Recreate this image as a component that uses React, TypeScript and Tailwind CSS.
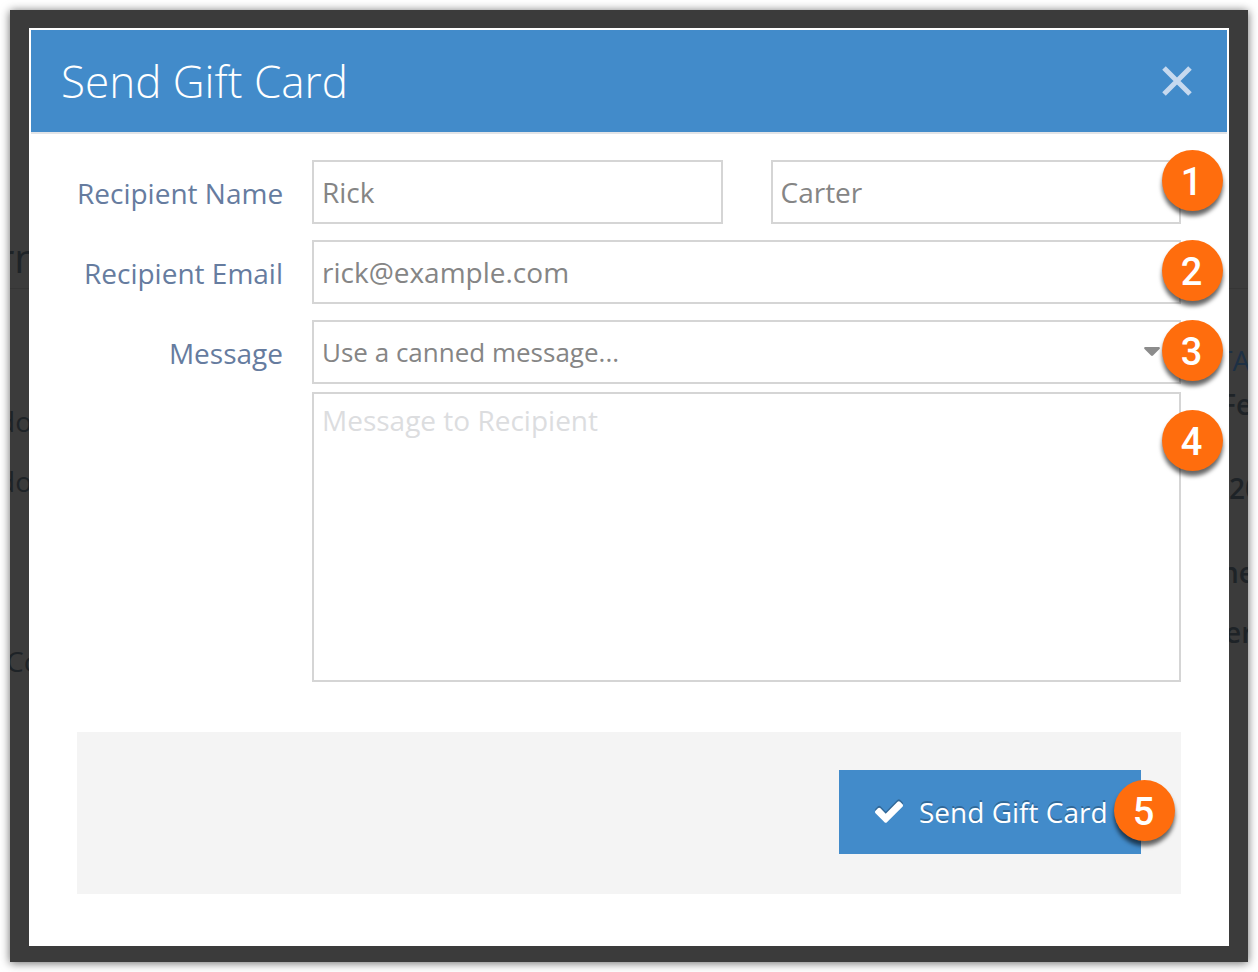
import type { ReactNode } from "react";

const fieldClass =
	"block w-full border-2 border-[#d5d5d5] bg-white px-2 text-[#858585] outline-none placeholder:text-[#dcdddf]";

const labelClass =
	"text-right text-[28px] leading-[66px] whitespace-nowrap text-[#667c9f]";

function Step({ n, className }: { n: number; className: string }) {
	return (
		<span
			className={`pointer-events-none absolute flex size-[61px] items-center justify-center rounded-full bg-[#ff6d0d] pr-0.5 pt-0.5 font-[Roboto,sans-serif] text-[38px] leading-none font-medium text-white shadow-[0_5px_4px_rgba(0,0,0,0.6)] ${className}`}
		>
			{n}
		</span>
	);
}

function Row({
	label,
	htmlFor,
	children,
}: {
	label: string;
	htmlFor: string;
	children: ReactNode;
}) {
	return (
		<div className="grid grid-cols-[206px_minmax(0,1fr)] gap-x-[29px]">
			<label htmlFor={htmlFor} className={labelClass}>
				{label}
			</label>
			{children}
		</div>
	);
}

/* Dimmed page showing on both sides of the dialog */
function PageLeft() {
	return (
		<div className="w-[19px] shrink-0 overflow-hidden pt-[218px] text-[28px] leading-10 whitespace-nowrap text-[#1e2327]">
			<p className="-ml-3 h-[61px] border-b border-[#353535] text-[40px] leading-[60px]">rn</p>
			<p className="-ml-3 pt-28">do</p>
			<p className="-ml-3 pt-5">do</p>
			<p className="-ml-1 pt-[140px]">Co</p>
		</div>
	);
}

function PageRight() {
	return (
		<div className="w-[19px] shrink-0 overflow-hidden whitespace-nowrap text-[28px] leading-10 font-semibold text-[#1e2327]">
			<div className="h-[279px] border-b border-[#353535]" />
			<p className="-ml-3 pt-[51px] font-normal text-[#1d3044]">TA</p>
			<p className="-ml-2 pt-1">Fe</p>
			<p className="pt-11">20</p>
			<p className="-ml-2 pt-11">ne</p>
			<p className="-ml-1 pt-5">er</p>
		</div>
	);
}

export default function App() {
	return (
		<div className="min-h-screen bg-white p-2.5 font-['Open_Sans',sans-serif]">
			<div className="flex bg-[#3b3b3b] shadow-[0_1px_9px_rgba(0,0,0,0.6)]">
				<PageLeft />

				<div
					role="dialog"
					aria-labelledby="dialog-title"
					className="mt-[18px] mb-4 min-w-0 flex-1 border-2 border-white bg-white"
				>
					<header className="flex h-[104px] items-center justify-between border-b-2 border-[#e2e4e7] bg-[#428bca] pr-[34px] pl-[30px]">
						<h1 id="dialog-title" className="text-[44px] leading-[60px] font-light text-white">
							Send Gift Card
						</h1>
						<button type="button" aria-label="Close" className="text-[#c6d9ef]">
							<svg width="32" height="32" viewBox="0 0 32 32" fill="none" stroke="currentColor" strokeWidth="5">
								<path d="M3 3 29 29M29 3 3 29" />
							</svg>
						</button>
					</header>

					<form className="px-[46px] pt-[26px] pb-[50px]" onSubmit={(e) => e.preventDefault()}>
						<div className="flex flex-col gap-3.5">
							<Row label="Recipient Name" htmlFor="first-name">
								<div className="relative grid grid-cols-2 gap-12">
									<input id="first-name" defaultValue="Rick" className={`h-16 text-[28px] ${fieldClass}`} />
									<input aria-label="Last name" defaultValue="Carter" className={`h-16 text-[28px] ${fieldClass}`} />
									<Step n={1} className="-top-2.5 -right-[42px]" />
								</div>
							</Row>

							<Row label="Recipient Email" htmlFor="email">
								<div className="relative">
									<input
										id="email"
										type="email"
										defaultValue="rick@example.com"
										className={`h-16 text-[28px] ${fieldClass}`}
									/>
									<Step n={2} className="top-0 -right-[42px]" />
								</div>
							</Row>

							<Row label="Message" htmlFor="canned">
								<div className="flex flex-col gap-2">
									<div className="relative">
										<select id="canned" className={`h-16 appearance-none text-[26px] ${fieldClass}`}>
											<option>Use a canned message...</option>
										</select>
										<svg
											className="pointer-events-none absolute top-[27px] right-[21px] text-[#8c8c8c]"
											width="16"
											height="9"
											viewBox="0 0 16 9"
											fill="currentColor"
										>
											<path d="M1 0h14q1.500 .5 .5 2L9 8.500q-1 .8-2 0L.5 2Q-.5.5 1 0Z" />
										</svg>
										<Step n={3} className="top-0 -right-[42px]" />
									</div>
									<div className="relative">
										<textarea
											aria-label="Message to Recipient"
											placeholder="Message to Recipient"
											className={`h-[290px] resize-none pt-[7px] text-[28px] leading-[38px] ${fieldClass}`}
										/>
										<Step n={4} className="top-[18px] -right-[42px]" />
									</div>
								</div>
							</Row>
						</div>

						<footer className="mt-[50px] flex justify-end bg-[#f4f4f4] px-10 pt-[38px] pb-10">
							<div className="relative">
								<button
									type="submit"
									className="flex h-[84px] w-[302px] items-center gap-4 bg-[#428bca] pl-9 text-[28px] whitespace-nowrap text-white [text-shadow:0_-2px_0_rgba(0,0,0,0.25)]"
								>
									<svg
										className="drop-shadow-[0_-2px_0_rgba(0,0,0,0.25)]"
										width="28"
										height="22"
										viewBox="121 334 1550 1188"
										fill="currentColor"
									>
										<path d="M1671 566q0 40-28 68l-724 724-136 136q-28 28-68 28t-68-28l-136-136-362-362q-28-28-28-68t28-68l136-136q28-28 68-28t68 28l294 295 656-657q28-28 68-28t68 28l136 136q28 28 28 68z" />
									</svg>
									Send Gift Card
								</button>
								<Step n={5} className="top-2.5 -right-[34px]" />
							</div>
						</footer>
					</form>
				</div>

				<PageRight />
			</div>
		</div>
	);
}
